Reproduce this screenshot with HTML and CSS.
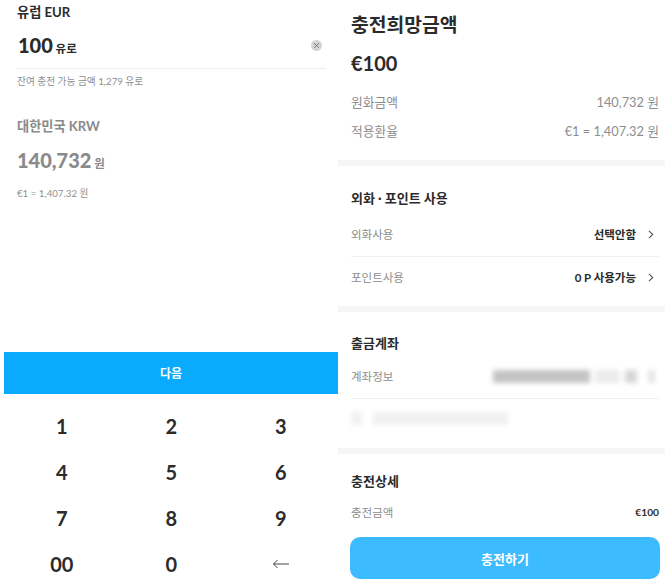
FILE: index.html
```html
<!DOCTYPE html>
<html lang="ko">
<head>
  <meta charset="UTF-8">
  <meta name="viewport" content="width=device-width, initial-scale=1.0">
  <title>충전</title>
  <link rel="stylesheet" href="styles.css">
</head>
<body>
  <div class="pagina">
    <!-- Left: amount input -->
    <section class="entrada">
      <div class="campos">
        <h2 class="moneda">유럽 EUR</h2>
        <div class="monto-fila">
          <p class="monto"><strong>100</strong> <span>유로</span></p>
          <span class="borrar">
            <svg width="7" height="7" viewBox="0 0 7 7"><path d="M1.2 1.2l4.6 4.6M5.8 1.2L1.2 5.8" stroke="#777" stroke-width="1" fill="none"/></svg>
          </span>
        </div>
        <p class="nota">잔여 충전 가능 금액 1,279 유로</p>
        <h2 class="moneda apagado moneda-krw">대한민국 KRW</h2>
        <p class="monto apagado monto-krw"><strong>140,732</strong> <span>원</span></p>
        <p class="nota nota-tasa">€1 = 1,407.32 원</p>
      </div>
      <button class="boton-siguiente">다음</button>
      <div class="teclado">
        <span>1</span><span>2</span><span>3</span>
        <span>4</span><span>5</span><span>6</span>
        <span>7</span><span>8</span><span>9</span>
        <span>00</span><span>0</span>
        <span>
          <svg width="18" height="10" viewBox="0 0 18 10"><path d="M17 5H1.5M5.5 1L1.5 5l4 4" stroke="#444" stroke-width="1" fill="none"/></svg>
        </span>
      </div>
    </section>

    <!-- Right: summary -->
    <section class="resumen">
      <div class="bloque bloque-top">
        <h1 class="titulo">충전희망금액</h1>
        <p class="total">€100</p>
        <div class="fila-gris fila-won"><span>원화금액</span><span>140,732 원</span></div>
        <div class="fila-gris fila-tasa"><span>적용환율</span><span>€1 = 1,407.32 원</span></div>
      </div>

      <div class="bloque bloque-uso">
        <h2 class="subtitulo">외화 · 포인트 사용</h2>
        <div class="fila fila-linea">
          <span class="etiqueta">외화사용</span>
          <span class="valor">선택안함
            <svg width="6" height="9" viewBox="0 0 6 9"><path d="M1 .8l3.7 3.7L1 8.2" stroke="#555" stroke-width="1.1" fill="none"/></svg>
          </span>
        </div>
        <div class="fila">
          <span class="etiqueta">포인트사용</span>
          <span class="valor">0 P 사용가능
            <svg width="6" height="9" viewBox="0 0 6 9"><path d="M1 .8l3.7 3.7L1 8.2" stroke="#555" stroke-width="1.1" fill="none"/></svg>
          </span>
        </div>
      </div>

      <div class="bloque bloque-cuenta">
        <h2 class="subtitulo">출금계좌</h2>
        <div class="fila fila-linea fila-cuenta">
          <span class="etiqueta">계좌정보</span>
          <span class="borroso"><i class="b1"></i><i class="b2"></i><i class="b3"></i><i class="b4"></i></span>
        </div>
        <div class="borroso-nota"><i class="b5"></i><i class="b6"></i></div>
      </div>

      <div class="bloque bloque-detalle">
        <h2 class="subtitulo">충전상세</h2>
        <div class="fila fila-detalle">
          <span class="etiqueta">충전금액</span>
          <span class="valor-chico">€100</span>
        </div>
        <button class="boton-cargar">충전하기</button>
      </div>
    </section>
  </div>
</body>
</html>
```

FILE: styles.css
```css
body {
  margin: 0;
  padding: 0;
  background-color: #ffffff;
  color: #2b2b2b;
  font-family: Lato, "Noto Sans CJK KR", sans-serif;
  overflow: hidden;
}

h1, h2, p {
  margin: 0;
  font-weight: normal;
}

.pagina {
  display: flex;
  width: 667px;
  height: 585px;
  overflow: hidden;
}

/* Left panel */
.entrada {
  width: 334px;
  margin-left: 4px;
  display: flex;
  flex-direction: column;
}

.campos {
  flex: none;
  height: 352px;
  padding-left: 13px;
  box-sizing: border-box;
}

.moneda {
  font-size: 13.2px;
  font-weight: 700;
  line-height: 20px;
  margin-top: 2px;
}

.apagado {
  color: #8a8a8a;
}

.moneda-krw {
  margin-top: 28px;
}

.monto-fila {
  width: 309px;
  height: 47px;
  box-sizing: border-box;
  border-bottom: 1px solid #ececec;
  display: flex;
  justify-content: space-between;
  align-items: center;
}

.monto {
  font-size: 11.5px;
  font-weight: 700;
  margin-left: 1px;
}

.monto strong {
  font-size: 20px;
}

.monto-krw {
  margin: 10px 0 0;
  line-height: 28px;
}

.borrar {
  width: 11px;
  height: 11px;
  margin-right: 4px;
  border-radius: 50%;
  background-color: #d4d4d4;
  display: flex;
  align-items: center;
  justify-content: center;
}

.nota {
  font-size: 9.7px;
  color: #8f8f8f;
  line-height: 14px;
  margin-top: 5px;
}

.nota-tasa {
  margin-top: 8px;
}

.boton-siguiente {
  flex: none;
  height: 42px;
  border: none;
  background-color: #0aabff;
  color: #ffffff;
  font-family: inherit;
  font-size: 12px;
  font-weight: 700;
  padding: 0 0 2px;
}

.teclado {
  display: grid;
  grid-template-columns: repeat(3, 109.5px);
  grid-auto-rows: 46px;
  padding: 9px 0 0 3px;
  font-size: 20px;
  font-weight: 700;
}

.teclado span {
  display: flex;
  align-items: center;
  justify-content: center;
}

/* Right panel */
.resumen {
  width: 327px;
  display: flex;
  flex-direction: column;
}

.bloque {
  flex: none;
  padding: 0 6px 0 13px;
  border-bottom: 6px solid #f4f5f7;
}

.bloque-top {
  height: 166px;
  box-sizing: border-box;
  padding-top: 11px;
}

.titulo {
  font-size: 19.3px;
  font-weight: 700;
  line-height: 28px;
}

.total {
  font-size: 20px;
  font-weight: 700;
  line-height: 28px;
  margin-top: 10px;
}

.fila-gris {
  display: flex;
  justify-content: space-between;
  font-size: 12.8px;
  line-height: 20px;
  color: #8d8d8d;
}

.fila-won {
  margin-top: 15px;
}

.fila-tasa {
  margin-top: 9px;
}

.bloque-uso {
  height: 146px;
  box-sizing: border-box;
  padding-top: 22px;
}

.subtitulo {
  font-size: 13px;
  font-weight: 700;
  line-height: 20px;
}

.fila {
  display: flex;
  justify-content: space-between;
  align-items: center;
  height: 40px;
}

.fila-linea {
  height: 44px;
  border-bottom: 1px solid #f1f1f1;
}

.bloque-uso .fila-linea {
  margin-top: 4px;
}

.etiqueta {
  font-size: 11.5px;
  color: #8d8d8d;
}

.valor {
  font-size: 11.5px;
  font-weight: 700;
  display: flex;
  align-items: center;
  gap: 12px;
  margin-right: 5px;
}

.bloque-cuenta {
  height: 142px;
  box-sizing: border-box;
  padding-top: 21px;
}

.fila-cuenta {
  margin-top: 1px;
}

.borroso {
  display: flex;
  align-items: center;
  gap: 5px;
  margin-right: 4px;
  filter: blur(2.5px);
}

.borroso i {
  display: block;
  height: 13px;
}

.b1 { width: 97px; background-color: #c4c4c4; }
.b2 { width: 25px; background-color: #ececec; }
.b3 { width: 12px; background-color: #d6d6d6; }
.b4 { width: 7px; margin-left: 6px; background-color: #e6e6e6; }

.borroso-nota {
  display: flex;
  gap: 11px;
  margin-top: 13px;
  filter: blur(2.5px);
}

.borroso-nota i {
  display: block;
  height: 13px;
  background-color: #f1f1f1;
}

.b5 { width: 11px; }
.b6 { width: 135px; }

.bloque-detalle {
  border-bottom: none;
  padding-top: 17px;
}

.fila-detalle {
  height: 32px;
  margin-top: 5px;
}

.valor-chico {
  font-size: 10.2px;
  font-weight: 700;
}

.boton-cargar {
  display: block;
  width: 310px;
  height: 42px;
  margin: 9px 0 0 -1px;
  border: none;
  border-radius: 10px;
  background-color: #3dbbff;
  color: #ffffff;
  font-family: inherit;
  font-size: 13px;
  font-weight: 700;
}
```
